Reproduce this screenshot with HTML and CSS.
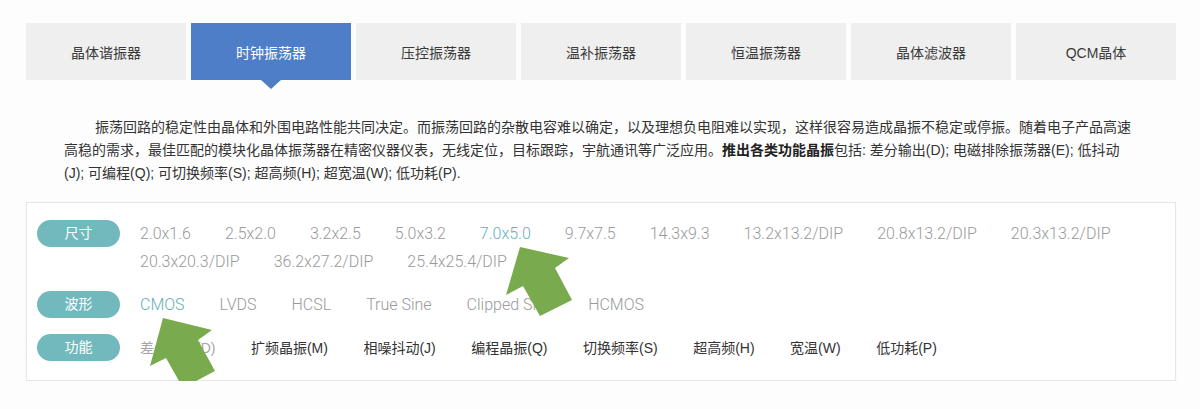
FILE: index.html
```html
<!DOCTYPE html>
<html lang="zh-CN">
<head>
    <meta charset="UTF-8">
    <meta name="viewport" content="width=device-width, initial-scale=1.0">
    <title>时钟振荡器</title>
    <link rel="stylesheet" href="styles.css">
</head>
<body>
    <div class="page">
        <ul class="tabs">
            <li class="tab">晶体谐振器</li>
            <li class="tab active">时钟振荡器</li>
            <li class="tab">压控振荡器</li>
            <li class="tab">温补振荡器</li>
            <li class="tab">恒温振荡器</li>
            <li class="tab">晶体滤波器</li>
            <li class="tab">QCM晶体</li>
        </ul>

        <p class="intro">振荡回路的稳定性由晶体和外围电路性能共同决定。而振荡回路的杂散电容难以确定，以及理想负电阻难以实现，这样很容易造成晶振不稳定或停振。随着电子产品高速高稳的需求，最佳匹配的模块化晶体振荡器在精密仪器仪表，无线定位，目标跟踪，宇航通讯等广泛应用。<strong>推出各类功能晶振</strong>包括: 差分输出(D); 电磁排除振荡器(E); 低抖动(J); 可编程(Q); 可切换频率(S); 超高频(H); 超宽温(W); 低功耗(P).</p>

        <div class="filter">
            <div class="filter-row">
                <span class="filter-label">尺寸</span>
                <ul class="filter-opts">
                    <li>2.0x1.6</li>
                    <li>2.5x2.0</li>
                    <li>3.2x2.5</li>
                    <li>5.0x3.2</li>
                    <li class="on">7.0x5.0</li>
                    <li>9.7x7.5</li>
                    <li>14.3x9.3</li>
                    <li>13.2x13.2/DIP</li>
                    <li>20.8x13.2/DIP</li>
                    <li>20.3x13.2/DIP</li>
                    <li>20.3x20.3/DIP</li>
                    <li>36.2x27.2/DIP</li>
                    <li>25.4x25.4/DIP</li>
                </ul>
            </div>
            <div class="filter-row">
                <span class="filter-label">波形</span>
                <ul class="filter-opts wave">
                    <li class="on">CMOS</li>
                    <li>LVDS</li>
                    <li>HCSL</li>
                    <li>True Sine</li>
                    <li>Clipped Sine</li>
                    <li>HCMOS</li>
                </ul>
            </div>
            <div class="filter-row">
                <span class="filter-label">功能</span>
                <ul class="filter-opts func">
                    <li class="off">差分输出(D)</li>
                    <li>扩频晶振(M)</li>
                    <li>相噪抖动(J)</li>
                    <li>编程晶振(Q)</li>
                    <li>切换频率(S)</li>
                    <li>超高频(H)</li>
                    <li>宽温(W)</li>
                    <li>低功耗(P)</li>
                </ul>
            </div>
        </div>
    </div>

    <!-- annotation arrows drawn over the filter -->
    <svg class="pointers" viewBox="0 0 1200 409" width="1200" height="409">
        <polygon points="520,247 569,258 555,268 572,300 540,316 523,286 506,295" />
        <polygon points="163,318 212,330 198,340 215,371 183,388 166,358 150,366" />
    </svg>
</body>
</html>
```

FILE: styles.css
```css
body {
    margin: 0;
    background-color: #fdfdfd;
    font-family: "Liberation Sans", "Noto Sans CJK SC", sans-serif;
    color: #333;
    position: relative;
}

ul {
    list-style: none;
    margin: 0;
    padding: 0;
}

.page {
    width: 1150px;
    margin-left: 26px;
    padding-top: 23px;
}

.tabs {
    display: flex;
    gap: 5px;
}

.tab {
    flex: 1;
    height: 57px;
    display: flex;
    align-items: center;
    justify-content: center;
    background-color: #efefef;
    font-size: 14px;
    color: #3a3a3a;
}

.tab.active {
    position: relative;
    background-color: #4e7ec7;
    color: #fff;
}

.tab.active::after {
    content: "";
    position: absolute;
    top: 100%;
    left: 50%;
    margin-left: -10px;
    border-left: 10px solid transparent;
    border-right: 10px solid transparent;
    border-top: 9px solid #4e7ec7;
}

.intro {
    margin: 36px 40px 0 38px;
    font-size: 14px;
    line-height: 23px;
    text-indent: 31px;
    color: #333;
}

.intro strong {
    font-weight: bold;
    color: #222;
}

.filter {
    margin-top: 17px;
    padding: 17px 10px 18px;
    border: 1px solid #e6e6e6;
    background-color: #fff;
    box-shadow: 0 2px 2px rgba(0, 0, 0, 0.05);
}

.filter-row {
    display: flex;
    align-items: flex-start;
    margin-bottom: 15px;
}

.filter-row:last-child {
    margin-bottom: 0;
}

.filter-label {
    flex: none;
    width: 83px;
    height: 27px;
    line-height: 27px;
    margin-right: 20px;
    border-radius: 14px;
    background-color: #72b9bd;
    color: #fff;
    font-size: 14px;
    text-align: center;
}

.filter-opts {
    display: flex;
    flex-wrap: wrap;
    column-gap: 34px;
    font-family: Roboto, "Noto Sans CJK SC", sans-serif;
    font-weight: 300;
    font-size: 16px;
    line-height: 28px;
    color: #9a9a9a;
}

.filter-opts .on {
    color: #62b1b7;
}

.filter-opts.wave {
    column-gap: 35px;
}

.filter-opts.func {
    font-family: "Liberation Sans", "Noto Sans CJK SC", sans-serif;
    font-weight: normal;
    font-size: 14px;
    column-gap: 35.5px;
    color: #333;
}

.filter-opts.func .off {
    color: #a5a5a5;
}

.pointers {
    position: absolute;
    top: 0;
    left: 0;
    pointer-events: none;
}

.pointers polygon {
    fill: #79aa4e;
}
```
